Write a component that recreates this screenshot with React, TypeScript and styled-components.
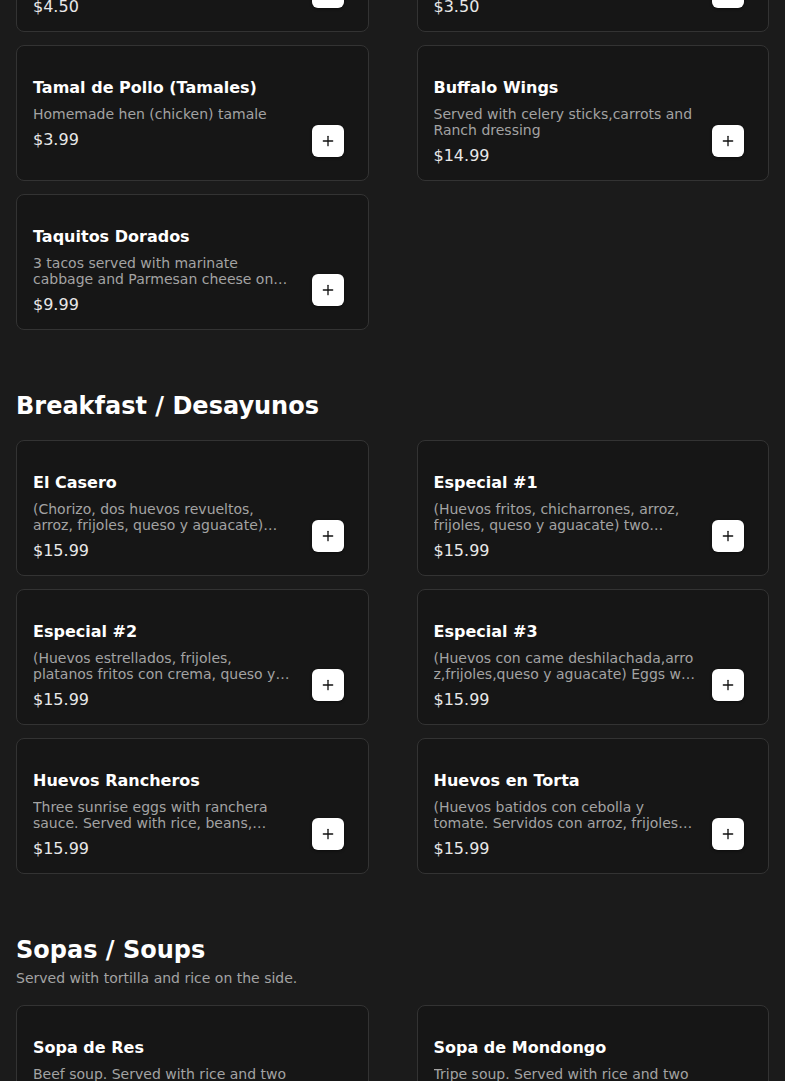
import * as React from "react";
import styled, { createGlobalStyle } from "styled-components";
import { Plus } from "lucide-react";

const GlobalStyle = createGlobalStyle`
  html, body {
    margin: 0;
    background: #1b1b1b;
    color: #fff;
    font-family: "DejaVu Sans", "Noto Sans", sans-serif;
  }
  * {
    box-sizing: border-box;
  }
`;

// the screenshot is taken part way down the menu, so the list starts above the fold
const Page = styled.main`
  padding: 0 16px 40px;
  margin-top: -152px;
`;

const Section = styled.section`
  & + & {
    margin-top: 62px;
  }
`;

const SectionTitle = styled.h2<{ $hasNote?: boolean }>`
  margin: 0 0 ${(p) => (p.$hasNote ? "5px" : "19px")};
  font-size: 24px;
  line-height: 29px;
  font-weight: 700;
  color: #fff;
`;

const SectionNote = styled.p`
  margin: 0 0 18px;
  font-size: 14px;
  line-height: 17px;
  color: #a3a3a3;
`;

const Grid = styled.div`
  display: grid;
  grid-template-columns: 1fr 1fr;
  column-gap: 48px;
  row-gap: 13px;
`;

const Card = styled.div`
  display: flex;
  gap: 16px;
  height: 136px;
  padding: 30px 24px 11px 16px;
  background: #161616;
  border: 1px solid #333;
  border-radius: 8px;
`;

const Info = styled.div`
  flex: 1;
  min-width: 0;
`;

const ItemName = styled.h3`
  margin: 0;
  font-size: 16px;
  line-height: 24px;
  font-weight: 700;
  color: #fff;
`;

const ItemText = styled.p`
  margin: 5.5px 0 0;
  font-size: 14px;
  line-height: 16px;
  color: #a3a3a3;
  overflow-wrap: anywhere;
  display: -webkit-box;
  -webkit-line-clamp: 2;
  -webkit-box-orient: vertical;
  overflow: hidden;
`;

const Price = styled.div`
  margin-top: 6px;
  font-size: 16px;
  line-height: 24px;
  color: #e8e8e8;
`;

const AddButton = styled.button`
  align-self: flex-end;
  flex-shrink: 0;
  width: 32px;
  height: 32px;
  margin-bottom: 12px;
  padding: 0;
  display: flex;
  align-items: center;
  justify-content: center;
  background: #fff;
  color: #111;
  border: none;
  border-radius: 6px;
  box-shadow: 0 1px 3px rgba(0, 0, 0, 0.45);
  cursor: pointer;
`;

interface Item {
  name: string;
  text: string;
  price: string;
}

interface MenuSection {
  title: string;
  note?: string;
  items: Item[];
}

const menu: MenuSection[] = [
  {
    title: "Appetizers / Aperitivos",
    items: [
      {
        name: "Pupusa de Queso",
        text: "Handmade corn tortilla stuffed with cheese, served with curtido and salsa",
        price: "$4.50",
      },
      {
        name: "Empanada de Leche",
        text: "Sweet plantain turnover filled with vanilla custard and sprinkled sugar",
        price: "$3.50",
      },
      {
        name: "Tamal de Pollo (Tamales)",
        text: "Homemade hen (chicken) tamale",
        price: "$3.99",
      },
      {
        name: "Buffalo Wings",
        text: "Served with celery sticks,carrots and Ranch dressing",
        price: "$14.99",
      },
      {
        name: "Taquitos Dorados",
        text: "3 tacos served with marinate cabbage and Parmesan cheese on top",
        price: "$9.99",
      },
    ],
  },
  {
    title: "Breakfast / Desayunos",
    items: [
      {
        name: "El Casero",
        text: "(Chorizo, dos huevos revueltos, arroz, frijoles, queso y aguacate) Chorizo, two scrambled eggs, rice, beans, cheese and avocado",
        price: "$15.99",
      },
      {
        name: "Especial #1",
        text: "(Huevos fritos, chicharrones, arroz, frijoles, queso y aguacate) two…",
        price: "$15.99",
      },
      {
        name: "Especial #2",
        text: "(Huevos estrellados, frijoles, platanos fritos con crema, queso y aguacate) Two sunny side up eggs, beans, fried plantains",
        price: "$15.99",
      },
      {
        name: "Especial #3",
        text: "(Huevos con came deshilachada,arro\u200Bz,frijoles,queso y aguacate) Eggs w…",
        price: "$15.99",
      },
      {
        name: "Huevos Rancheros",
        text: "Three sunrise eggs with ranchera sauce. Served with rice, beans, cheese and tortillas",
        price: "$15.99",
      },
      {
        name: "Huevos en Torta",
        text: "(Huevos batidos con cebolla y tomate. Servidos con arroz, frijoles y queso) Scrambled eggs with onion and tomato",
        price: "$15.99",
      },
    ],
  },
  {
    title: "Sopas / Soups",
    note: "Served with tortilla and rice on the side.",
    items: [
      {
        name: "Sopa de Res",
        text: "Beef soup. Served with rice and two tortillas",
        price: "$16.99",
      },
      {
        name: "Sopa de Mondongo",
        text: "Tripe soup. Served with rice and two tortillas",
        price: "$16.99",
      },
    ],
  },
];

export default function App() {
  return (
    <>
      <GlobalStyle />
      <Page>
        {menu.map((section) => (
          <Section key={section.title}>
            <SectionTitle $hasNote={!!section.note}>{section.title}</SectionTitle>
            {section.note && <SectionNote>{section.note}</SectionNote>}
            <Grid>
              {section.items.map((item) => (
                <Card key={item.name}>
                  <Info>
                    <ItemName>{item.name}</ItemName>
                    <ItemText>{item.text}</ItemText>
                    <Price>{item.price}</Price>
                  </Info>
                  <AddButton aria-label={`Add ${item.name}`}>
                    <Plus size={16} strokeWidth={2} />
                  </AddButton>
                </Card>
              ))}
            </Grid>
          </Section>
        ))}
      </Page>
    </>
  );
}
